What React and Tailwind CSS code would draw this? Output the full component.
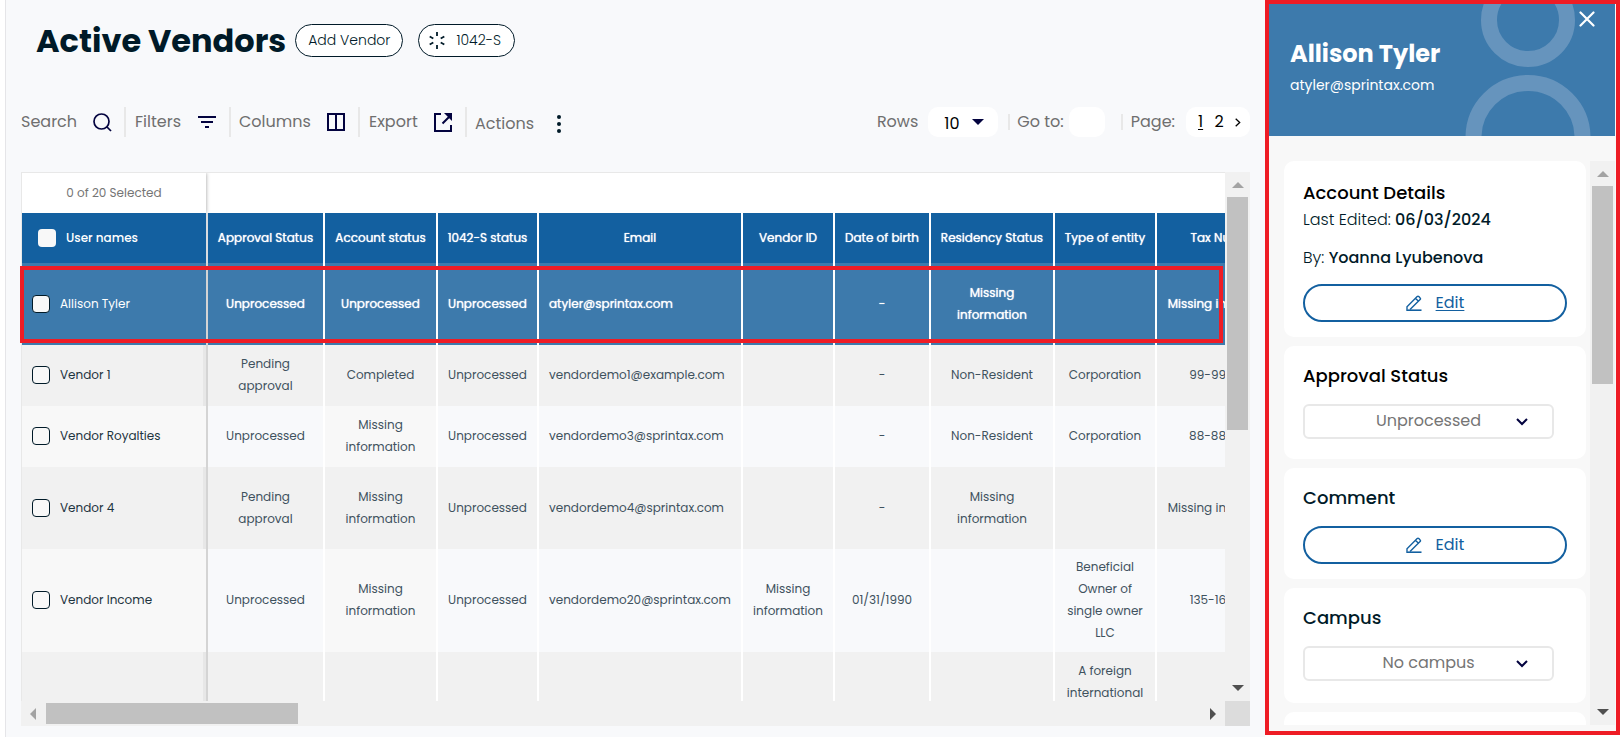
const COLUMNS = [
  { label: "Approval Status", width: "w-[117px]" },
  { label: "Account status", width: "w-[113px]" },
  { label: "1042-S status", width: "w-[101px]" },
  { label: "Email", width: "w-[204px]" },
  { label: "Vendor ID", width: "w-[92px]" },
  { label: "Date of birth", width: "w-[96px]" },
  { label: "Residency Status", width: "w-[124px]" },
  { label: "Type of entity", width: "w-[102px]" },
  { label: "Tax Number", width: "w-[141px]" },
];

const MISSING = "Missing information";

const ROWS = [
  {
    name: "Allison Tyler",
    height: "h-[82px]",
    selected: true,
    cells: ["Unprocessed", "Unprocessed", "Unprocessed", "atyler@sprintax.com", "", "-", MISSING, "", MISSING],
  },
  {
    name: "Vendor 1",
    height: "h-[61px]",
    cells: ["Pending approval", "Completed", "Unprocessed", "vendordemo1@example.com", "", "-", "Non-Resident", "Corporation", "99-9999999"],
  },
  {
    name: "Vendor Royalties",
    height: "h-[61px]",
    cells: ["Unprocessed", MISSING, "Unprocessed", "vendordemo3@sprintax.com", "", "-", "Non-Resident", "Corporation", "88-8888888"],
  },
  {
    name: "Vendor 4",
    height: "h-[82px]",
    cells: ["Pending approval", MISSING, "Unprocessed", "vendordemo4@sprintax.com", "", "-", MISSING, "", MISSING],
  },
  {
    name: "Vendor Income",
    height: "h-[103px]",
    cells: ["Unprocessed", MISSING, "Unprocessed", "vendordemo20@sprintax.com", MISSING, "01/31/1990", "", "Beneficial Owner of single owner LLC", "135-16-16166"],
  },
  {
    name: "",
    height: "h-[82px]",
    striped: true,
    cells: ["", "", "", "", "", "", "", "A foreign international organization", ""],
  },
];

function Separator({ className = "h-[30px]" }) {
  return <span className={`w-[2px] shrink-0 bg-[#e8e8e8] ${className}`} />;
}

function Arrow({ dir, className }) {
  const points = {
    up: "0,6 6,0 12,6",
    down: "0,0 12,0 6,6",
    left: "6,0 6,12 0,6",
    right: "0,0 6,6 0,12",
  }[dir];
  const vertical = dir === "up" || dir === "down";
  return (
    <svg width={vertical ? 12 : 6} height={vertical ? 6 : 12} className={className} aria-hidden="true">
      <polygon points={points} fill="currentColor" />
    </svg>
  );
}

function PencilIcon() {
  return (
    <svg width="16" height="16" viewBox="0 0 16 16" fill="none" stroke="currentColor" strokeWidth="1.400" aria-hidden="true">
      <path d="M.3 15.200H15.500" strokeWidth="1.600" />
      <path d="M1 14.800V11.800L11.200 1.600Q12 .800 12.800 1.600L14.100 2.900Q14.900 3.700 14.100 4.500L4 14.600M9.600 3.400L12.300 6.100" />
    </svg>
  );
}

function EditButton({ underlined = false, label }) {
  return (
    <button
      type="button"
      aria-label={label}
      className="flex h-[38px] w-full items-center justify-center gap-[14px] rounded-full border-2 border-[#1360a0] bg-white text-[16px] text-[#1360a0]"
    >
      <PencilIcon />
      <span className={underlined ? "underline underline-offset-2" : ""}>Edit</span>
    </button>
  );
}

function PanelSelect({ id, value }) {
  return (
    <div className="relative mr-[13px]">
      <select
        id={id}
        defaultValue={value}
        className="h-[35px] w-full appearance-none rounded-md border-2 border-[#e8e8e8] bg-white pb-[2px] text-center text-[16px] text-[#757575]"
      >
        <option>{value}</option>
      </select>
      <svg width="12" height="8" viewBox="0 0 12 8" className="pointer-events-none absolute top-[14px] right-[26px]" fill="none" stroke="#03033f" strokeWidth="2" aria-hidden="true">
        <path d="M1 1l5 5 5-5" />
      </svg>
    </div>
  );
}

function VendorTable() {
  return (
    <table className="w-[1276px] table-fixed border-separate border-spacing-0 text-[12px] leading-[22px]">
      <colgroup>
        <col className="w-[186px]" />
        {COLUMNS.map((c) => (
          <col key={c.label} className={c.width} />
        ))}
      </colgroup>
      <thead>
        <tr className="h-[50px] bg-[#1360a0] text-white">
          <th className="border-r-2 border-[#d9dce0] pl-4 text-left font-medium">
            <label className="flex items-center gap-[10px]">
              <input type="checkbox" className="h-[18px] w-[18px] appearance-none rounded bg-[#f8f8f8]" />
              User names
            </label>
          </th>
          {COLUMNS.map((c) => (
            <th key={c.label} className="border-r-2 border-white font-normal whitespace-nowrap [text-shadow:0_0_1px_white]">
              {c.label}
            </th>
          ))}
        </tr>
      </thead>
      <tbody>
        {ROWS.map((row, r) => {
          const striped = row.striped || r % 2 === 1;
          const rowStyle = row.selected
            ? "bg-[#3d7aac] text-white"
            : striped
              ? "bg-[#f1f1f1] text-[#3f525e]"
              : "bg-[#f8f9fb] text-[#3f525e]";
          const nameStyle = row.selected
            ? "border-[#d4d4d4]"
            : striped
              ? "border-[#d4d4d4] text-[#1d3440] shadow-[inset_-3px_0_0_#e7e7e7]"
              : "border-[#d4d4d4] bg-[#f8f8f8] text-[#1d3440]";
          return (
            <tr key={r} className={`${row.height} ${rowStyle}`}>
              <td className={`border-r-2 pb-px pl-[10px] ${nameStyle}`}>
                {row.name && (
                  <label className="flex items-center gap-[10px]">
                    <input type="checkbox" className="h-[18px] w-[18px] appearance-none rounded border border-[#001a28] bg-[#f8f8f8]" />
                    {row.name}
                  </label>
                )}
              </td>
              {row.cells.map((cell, c) => (
                <td
                  key={c}
                  className={`border-r-2 border-white px-[10px] pb-px ${c === 3 ? "text-left" : "text-center"} ${c === 8 ? "whitespace-nowrap" : ""} ${c === 1 && !striped && !row.selected ? "bg-[#f8f8f8]" : ""} ${row.selected ? "[text-shadow:0_0_1px_white]" : ""}`}
                >
                  {cell}
                </td>
              ))}
            </tr>
          );
        })}
      </tbody>
    </table>
  );
}

function ToolButton({ children, className = "" }) {
  return (
    <button type="button" className={`flex items-center justify-between text-[16px] text-[#6f6f6f] ${className}`}>
      {children}
    </button>
  );
}

function Toolbar() {
  return (
    <div className="mt-[50px] flex h-[30px] items-center justify-between text-[16px] text-[#6f6f6f]">
      <div className="flex items-center">
        <ToolButton className="w-[103px] pr-3">
          Search
          <svg width="19" height="19" viewBox="0 0 19 19" fill="none" stroke="#03033f" strokeWidth="1.700" aria-hidden="true">
            <circle cx="8.500" cy="8.500" r="7.500" />
            <path d="M14 14l4 4" />
          </svg>
        </ToolButton>
        <Separator />
        <ToolButton className="w-[103px] pr-[13px] pl-[9px]">
          Filters
          <svg width="18" height="13" fill="#03033f" aria-hidden="true">
            <path d="M0 0h18v2H0zM3 5h12v2H3zM7 10h4v2H7z" />
          </svg>
        </ToolButton>
        <Separator />
        <ToolButton className="w-[127px] pr-[13px] pl-2">
          Columns
          <svg width="18" height="18" fill="none" stroke="#03033f" strokeWidth="2" aria-hidden="true">
            <path d="M1 1h16v16H1zM9 1v16" />
          </svg>
        </ToolButton>
        <Separator />
        <ToolButton className="w-[105px] pr-3 pl-[9px]">
          Export
          <svg width="19" height="19" fill="none" stroke="#03033f" strokeWidth="2" aria-hidden="true">
            <path d="M7 1H1v17h16v-6M8.500 10.500l7-7" />
            <path d="M10 0h8v8z" fill="#03033f" stroke="none" />
          </svg>
        </ToolButton>
        <Separator />
        <ToolButton className="w-[106px] pt-1 pr-3 pl-2">
          Actions
          <svg width="4" height="20" fill="#001a28" aria-hidden="true">
            <circle cx="2" cy="3" r="2" />
            <circle cx="2" cy="10" r="2" />
            <circle cx="2" cy="17" r="2" />
          </svg>
        </ToolButton>
      </div>

      <div className="flex items-center">
        <label htmlFor="rows">Rows</label>
        <div className="relative ml-[10px]">
          <select id="rows" defaultValue="10" className="h-[30px] w-[70px] appearance-none rounded-[10px] bg-white pt-[3px] pl-4 text-[16px] text-black">
            <option>10</option>
          </select>
          <Arrow dir="down" className="pointer-events-none absolute top-[12px] right-[14px] text-[#03033f]" />
        </div>
        <Separator className="ml-[10px] h-4" />
        <label htmlFor="goto" className="ml-[7px]">Go to:</label>
        <input id="goto" type="text" className="ml-[5px] h-[30px] w-9 rounded-[10px] bg-white px-1 text-black" />
        <Separator className="ml-4 h-4" />
        <span className="ml-2">Page:</span>
        <nav aria-label="Pagination" className="ml-[11px] flex h-[30px] w-16 items-center justify-between rounded-[10px] bg-white pr-[9px] pl-3 text-[16px] text-black">
          <a href="#1" className="underline underline-offset-2">1</a>
          <a href="#2">2</a>
          <a href="#next" aria-label="Next page">
            <svg width="6" height="9" viewBox="0 0 6 9" fill="none" stroke="currentColor" strokeWidth="1.300" aria-hidden="true">
              <path d="M.7.700l4 3.800-4 3.800" />
            </svg>
          </a>
        </nav>
      </div>
    </div>
  );
}

function VendorPanel() {
  return (
    <aside className="mb-[2px] flex w-[355px] shrink-0 flex-col border-4 border-[#ee1c25] bg-[#f8f8f8]">
      <header className="relative mr-px h-[132px] shrink-0 overflow-hidden bg-[#3d7aac] pt-[32px] pl-[21px] text-white">
        <svg width="126" height="132" className="absolute top-0 right-[24px]" fill="none" stroke="#6694bd" strokeWidth="16" aria-hidden="true">
          <circle cx="63" cy="16" r="39" />
          <circle cx="63" cy="133.500" r="54.500" />
        </svg>
        <h2 className="text-[24px] leading-9 font-bold">Allison Tyler</h2>
        <p className="mt-[3px] text-[14px] leading-[20px]">atyler@sprintax.com</p>
        <button type="button" aria-label="Close" className="absolute top-[7px] right-[20px]">
          <svg width="16" height="16" fill="none" stroke="white" strokeWidth="2.200" strokeLinecap="round" aria-hidden="true">
            <path d="M1.500 1.500l13 13M14.500 1.500l-13 13" />
          </svg>
        </button>
      </header>

      <div className="mt-[25px] mb-[6px] flex min-h-0 flex-1 justify-between pr-px pl-[15px]">
        <div className="flex min-w-0 flex-1 flex-col gap-[9px] overflow-hidden pr-1 *:shrink-0 *:rounded-[10px] *:bg-white *:pr-[19px] *:pl-[19px]">
          <section className="h-[176px] pt-[18px] text-[#001a28]">
            <h3 className="text-[18px] leading-7 font-medium text-black">Account Details</h3>
            <p className="mt-px text-[16px] leading-6 font-light">
              Last Edited: <span className="font-medium">06/03/2024</span>
            </p>
            <p className="my-[14px] text-[16px] leading-6 font-light">
              By: <span className="font-medium">Yoanna Lyubenova</span>
            </p>
            <EditButton underlined label="Edit account details" />
          </section>
          <section className="h-[113px] pt-4">
            <label htmlFor="approval" className="mb-[14px] block text-[18px] leading-7 font-medium text-black">Approval Status</label>
            <PanelSelect id="approval" value="Unprocessed" />
          </section>
          <section className="h-[111px] pt-4">
            <h3 className="mb-[14px] text-[18px] leading-7 font-medium text-[#001a28]">Comment</h3>
            <EditButton label="Edit comment" />
          </section>
          <section className="h-[115px] pt-4">
            <label htmlFor="campus" className="mb-[14px] block text-[18px] leading-7 font-medium text-[#001a28]">Campus</label>
            <PanelSelect id="campus" value="No campus" />
          </section>
          <section className="h-[113px]" />
        </div>
        <div className="flex w-[25px] shrink-0 flex-col items-center bg-[#f1f1f1]">
          <Arrow dir="up" className="mt-[10px] mb-[9px] shrink-0 text-[#a3a3a3]" />
          <div className="h-[198px] w-[21px] bg-[#c1c1c1]" />
          <Arrow dir="down" className="mt-auto mb-[10px] shrink-0 text-[#505050]" />
        </div>
      </div>
    </aside>
  );
}

export default function App() {
  return (
    <div className="flex h-screen overflow-hidden bg-white pl-[5px] font-['Poppins','Inter',sans-serif]">
      <main className="flex min-w-0 flex-1 flex-col border-l border-[#e5e5e8] bg-[#f8f9fb] px-[15px] pt-6 pb-[11px]">
        <div className="flex h-[33px] shrink-0 items-center pl-[15px] text-[#001a28]">
          <h1 className="text-[32px] leading-8 font-bold">Active Vendors</h1>
          <button type="button" className="ml-[9px] h-[33px] rounded-full border border-[#001a28] bg-white px-3 text-[14px] font-light">Add Vendor</button>
          <button type="button" className="ml-[15px] flex h-[33px] items-center gap-[11px] rounded-full border border-[#001a28] bg-white px-[10px] pr-[13px] text-[14px] font-light">
            <svg width="16" height="17" viewBox="0 0 16 17" fill="none" stroke="currentColor" strokeWidth="1.800" aria-hidden="true">
              <path d="M8 0v4M8 13v4M.7 4.500l3.600 2M11.700 10.500l3.600 2M15.300 4.500l-3.600 2M4.300 10.500l-3.600 2" />
            </svg>
            1042-S
          </button>
        </div>

        <Toolbar />

        <div className="relative mt-[35px] grid min-h-0 flex-1 grid-cols-[minmax(0,1fr)_25px] grid-rows-[minmax(0,1fr)_25px]">
          <div className="overflow-hidden border-t border-l border-[#e8e8e8] bg-[#f8f9fb]">
            <div className="h-10 bg-white">
              <p className="flex h-10 w-[184px] items-center justify-center text-[12px] text-[#757575] shadow-[0_0_4px_rgba(0,0,0,0.4)]">0 of 20 Selected</p>
            </div>
            <VendorTable />
          </div>
          <div className="flex flex-col items-center bg-[#f1f1f1]">
            <Arrow dir="up" className="mt-[10px] mb-[9px] shrink-0 text-[#a3a3a3]" />
            <div className="h-[233px] w-[21px] bg-[#c1c1c1]" />
            <Arrow dir="down" className="mt-auto mb-[10px] shrink-0 text-[#505050]" />
          </div>
          <div className="flex items-center bg-[#f1f1f1]">
            <Arrow dir="left" className="mr-[10px] ml-[9px] shrink-0 text-[#a3a3a3]" />
            <div className="h-[21px] w-[252px] bg-[#c1c1c1]" />
            <Arrow dir="right" className="mr-[9px] ml-auto shrink-0 text-[#505050]" />
          </div>
          <div className="bg-[#dcdcdc]" />
          <div className="pointer-events-none absolute top-[94px] right-[27px] -left-px h-[77px] border-4 border-[#ee1c25]" />
        </div>
      </main>
      <VendorPanel />
    </div>
  );
}
